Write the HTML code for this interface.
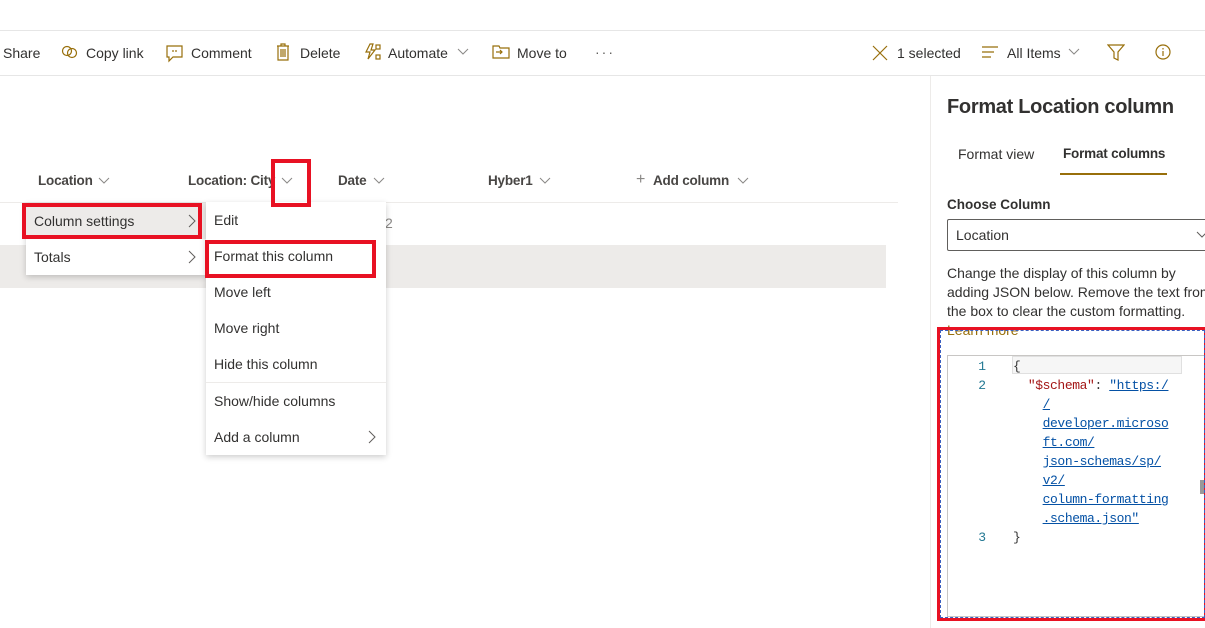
<!DOCTYPE html>
<html><head><style>
*{margin:0;padding:0;box-sizing:border-box}
body{width:1205px;height:628px;overflow:hidden;background:#fff;font-family:"Liberation Sans",sans-serif;color:#323130;position:relative;font-size:14px}
.a{position:absolute;white-space:nowrap}
.b{font-weight:bold;color:#484644;font-size:13.5px;letter-spacing:-0.2px}
.gold{color:#986f0b}
.mono{font-family:"Liberation Mono",monospace;font-size:13px}
.red{position:absolute;border:4px solid #e81123}
</style></head><body>
<div class="a" style="left:0;top:30px;width:1205px;height:1px;background:#e6e6e6"></div>
<div class="a" style="left:0;top:75px;width:1205px;height:1px;background:#e6e6e6"></div>
<div class="a" style="left:3px;top:45px">Share</div>
<svg class="a" style="left:61px;top:45px" width="18" height="14" fill="none" stroke="#986f0b" stroke-width="1.2"><circle cx="6" cy="6" r="4.5"/><circle cx="11" cy="8" r="4.5"/></svg>
<div class="a" style="left:86px;top:45px">Copy link</div>
<svg class="a" style="left:166px;top:45px" width="18" height="18" fill="none" stroke="#986f0b" stroke-width="1.2"><path d="M1 1h15v11H7l-4 4v-4H1z"/><path d="M7 5v2M10 5v2"/></svg>
<div class="a" style="left:191px;top:45px">Comment</div>
<svg class="a" style="left:276px;top:43px" width="14" height="18" fill="none" stroke="#986f0b" stroke-width="1.2"><path d="M1 3h12M5 3V1h4v2M2 3v14h10V3M5 6v8M7 6v8M9 6v8"/></svg>
<div class="a" style="left:300px;top:45px">Delete</div>
<svg class="a" style="left:364px;top:43px" width="18" height="18" fill="none" stroke="#986f0b" stroke-width="1.2"><path d="M6 1L2 9h4l-2 7 7-9H7l2-6z"/><rect x="12" y="2" width="4" height="4"/><rect x="12" y="12" width="4" height="4"/></svg>
<div class="a" style="left:388px;top:45px">Automate</div>
<svg class="a" style="left:457px;top:48px" width="12" height="8" fill="none" stroke="#8a8886"><path d="M1 1l5 5 5-5"/></svg>
<svg class="a" style="left:492px;top:45px" width="18" height="14" fill="none" stroke="#986f0b" stroke-width="1.2"><path d="M1 1h6l1 2h9v10H1z"/><path d="M4 7h6M8 5l2 2-2 2"/></svg>
<div class="a" style="left:517px;top:45px">Move to</div>
<div class="a" style="left:595px;top:44px;letter-spacing:2px;color:#605e5c">···</div>
<svg class="a" style="left:872px;top:45px" width="16" height="16" stroke="#986f0b" stroke-width="1.2"><path d="M1 1l14 14M15 1L1 15"/></svg>
<div class="a" style="left:897px;top:45px">1 selected</div>
<svg class="a" style="left:982px;top:46px" width="16" height="12" stroke="#986f0b" stroke-width="1.2"><path d="M0 1h16M0 6h12M0 11h9"/></svg>
<div class="a" style="left:1007px;top:45px">All Items</div>
<svg class="a" style="left:1068px;top:48px" width="12" height="8" fill="none" stroke="#8a8886"><path d="M1 1l5 5 5-5"/></svg>
<svg class="a" style="left:1107px;top:44px" width="18" height="18" fill="none" stroke="#986f0b" stroke-width="1.2"><path d="M1 1h16l-6 7v8l-4-2V8z"/></svg>
<svg class="a" style="left:1155px;top:44px" width="16" height="16" fill="none" stroke="#986f0b" stroke-width="1.2"><circle cx="8" cy="8" r="7"/><path d="M8 7v5M8 4v1.5"/></svg>
<div class="a b" style="left:38px;top:173px">Location</div>
<div class="a b" style="left:188px;top:173px">Location: City</div>
<div class="a b" style="left:338px;top:173px">Date</div>
<div class="a b" style="left:488px;top:173px">Hyber1</div>
<div class="a" style="left:636px;top:171px;color:#8a8886;font-size:16px">+</div>
<div class="a b" style="left:653px;top:173px">Add column</div>
<svg class="a" style="left:98px;top:177px" width="12" height="8" fill="none" stroke="#8a8886"><path d="M1 1l5 5 5-5"/></svg>
<svg class="a" style="left:281px;top:177px" width="12" height="8" fill="none" stroke="#8a8886"><path d="M1 1l5 5 5-5"/></svg>
<svg class="a" style="left:373px;top:177px" width="12" height="8" fill="none" stroke="#8a8886"><path d="M1 1l5 5 5-5"/></svg>
<svg class="a" style="left:539px;top:177px" width="12" height="8" fill="none" stroke="#8a8886"><path d="M1 1l5 5 5-5"/></svg>
<svg class="a" style="left:737px;top:177px" width="12" height="8" fill="none" stroke="#8a8886"><path d="M1 1l5 5 5-5"/></svg>
<div class="a" style="left:0;top:202px;width:898px;height:1px;background:#edebe9"></div>
<div class="a" style="left:385px;top:215px;color:#8a8886">2</div>
<div class="a" style="left:0;top:245px;width:886px;height:43px;background:#edebe9"></div>
<div class="a" style="left:26px;top:203px;width:180px;height:72px;background:#fff;box-shadow:0 2px 6px rgba(0,0,0,.2)">
 <div style="height:36px;background:#edebe9;padding:10px 8px">Column settings</div>
 <div style="padding:10px 8px">Totals</div>
</div>
<svg class="a" style="left:188px;top:214px" width="8" height="14" fill="none" stroke="#605e5c"><path d="M1 1l6 6-6 6"/></svg>
<svg class="a" style="left:188px;top:250px" width="8" height="14" fill="none" stroke="#605e5c"><path d="M1 1l6 6-6 6"/></svg>
<div class="a" style="left:206px;top:202px;width:180px;height:253px;background:#fff;box-shadow:0 2px 6px rgba(0,0,0,.2)">
 <div style="position:absolute;left:8px;top:10px">Edit</div>
 <div style="position:absolute;left:8px;top:46px">Format this column</div>
 <div style="position:absolute;left:8px;top:82px">Move left</div>
 <div style="position:absolute;left:8px;top:118px">Move right</div>
 <div style="position:absolute;left:8px;top:154px">Hide this column</div>
 <div style="position:absolute;left:0;top:180px;width:180px;height:1px;background:#edebe9"></div>
 <div style="position:absolute;left:8px;top:191px">Show/hide columns</div>
 <div style="position:absolute;left:8px;top:227px">Add a column</div>
</div>
<svg class="a" style="left:368px;top:430px" width="8" height="14" fill="none" stroke="#605e5c"><path d="M1 1l6 6-6 6"/></svg>
<div class="red" style="left:271px;top:159px;width:40px;height:48px"></div>
<div class="red" style="left:22px;top:203px;width:180px;height:36px"></div>
<div class="red" style="left:205px;top:240px;width:171px;height:38px"></div>
<div class="a" style="left:930px;top:76px;width:1px;height:552px;background:#edebe9"></div>
<div class="a" style="left:947px;top:96px;font-size:20px;font-weight:bold;color:#323130;letter-spacing:-0.3px">Format Location column</div>
<div class="a" style="left:958px;top:146px">Format view</div>
<div class="a" style="left:1063px;top:146px;font-weight:bold;font-size:13.5px;letter-spacing:-0.2px">Format columns</div>
<div class="a" style="left:1060px;top:173px;width:107px;height:2px;background:#986f0b"></div>
<div class="a" style="left:947px;top:197px;font-weight:bold;font-size:13.5px">Choose Column</div>
<div class="a" style="left:947px;top:219px;width:270px;height:32px;border:1px solid #605e5c;border-radius:2px;padding:7px 8px">Location</div>
<svg class="a" style="left:1196px;top:231px" width="12" height="8" fill="none" stroke="#605e5c"><path d="M1 1l5 5 5-5"/></svg>
<div class="a" style="left:947px;top:264px;line-height:19px;white-space:normal;width:270px;font-size:14px">Change the display of this column by adding JSON below. Remove the text from the box to clear the custom formatting.</div>
<div class="a gold" style="left:947px;top:322px">Learn more</div>
<div class="a" style="left:947px;top:355px;width:260px;height:262px;border:1px solid #c8c6c4;background:#fff"></div>
<div class="a" style="left:1012px;top:356px;width:170px;height:18px;border:1px solid #e0e0e0;background:#f6f6f6"></div>
<div class="a mono" style="left:966px;top:357px;line-height:19px;color:#237893;text-align:right;width:20px">1<br>2<br><br><br><br><br><br><br><br>3</div>
<div class="a mono" style="left:1013px;top:357px;line-height:19px;color:#0451a5;letter-spacing:-0.4px">
<span style="color:#333">{</span><br>
&nbsp;&nbsp;<span style="color:#a31515">"$schema"</span><span style="color:#333">: </span><u>"https:/</u><br>
&nbsp;&nbsp;&nbsp;&nbsp;<u>/</u><br>
&nbsp;&nbsp;&nbsp;&nbsp;<u>developer.microso</u><br>
&nbsp;&nbsp;&nbsp;&nbsp;<u>ft.com/</u><br>
&nbsp;&nbsp;&nbsp;&nbsp;<u>json-schemas/sp/</u><br>
&nbsp;&nbsp;&nbsp;&nbsp;<u>v2/</u><br>
&nbsp;&nbsp;&nbsp;&nbsp;<u>column-formatting</u><br>
&nbsp;&nbsp;&nbsp;&nbsp;<u>.schema.json"</u><br>
<span style="color:#333">}</span></div>
<div class="a" style="left:1200px;top:480px;width:4px;height:14px;background:#999"></div>
<div class="a" style="left:937px;top:327px;width:270px;height:294px;border:3px solid #e81123"></div>
<div class="a" style="left:940px;top:330px;width:265px;height:288px;border:1px dashed #3b5fc0"></div>
</body></html>
